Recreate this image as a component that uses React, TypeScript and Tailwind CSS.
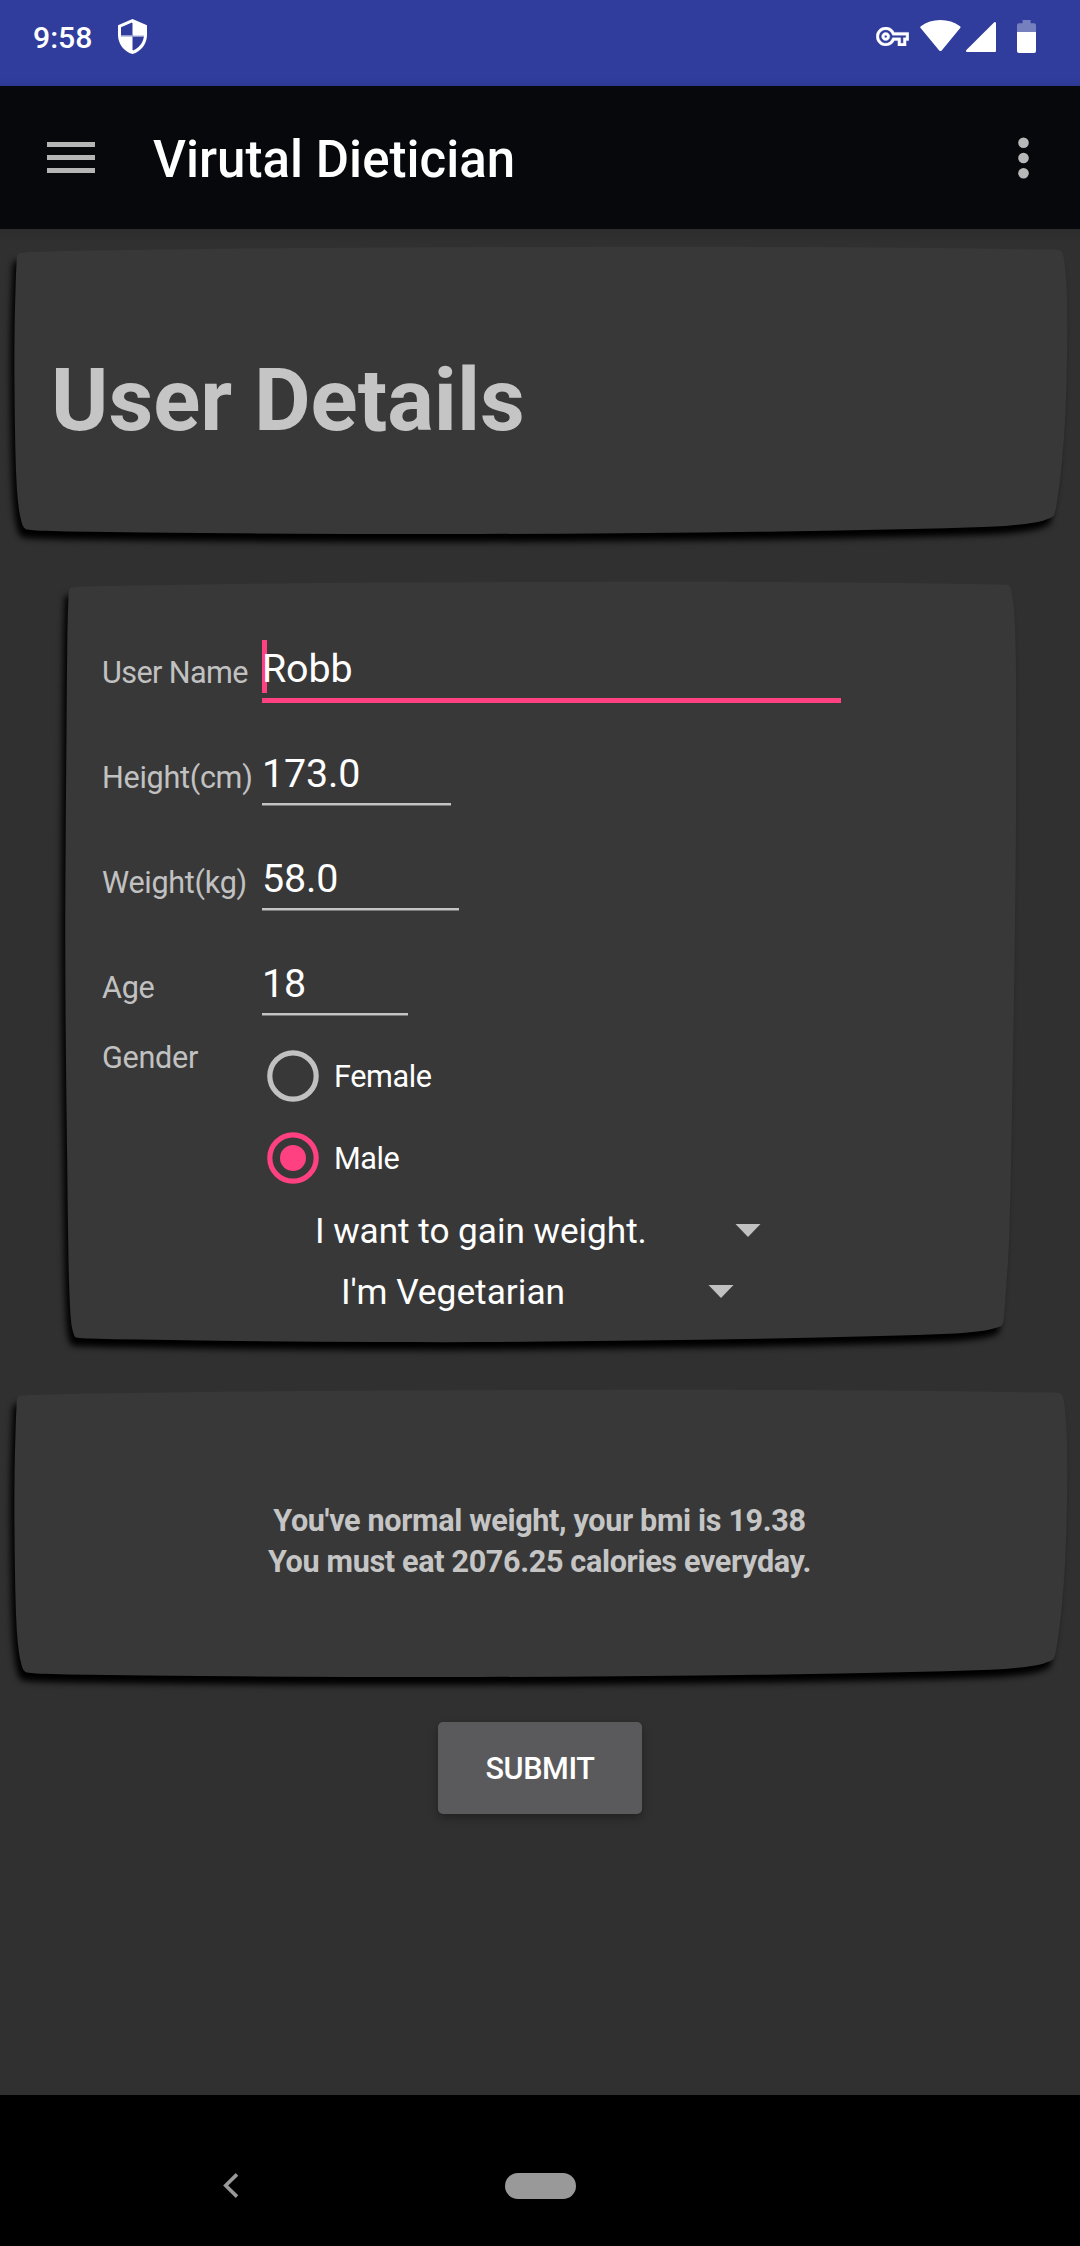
import React from "react";

type Point = [number, number];

// Closed Catmull-Rom spline through the given points.
function smoothPath(points: Point[]): string {
  const n = points.length;
  let d = `M${points[0][0]} ${points[0][1]}`;
  for (let i = 0; i < n; i++) {
    const p0 = points[(i - 1 + n) % n];
    const p1 = points[i];
    const p2 = points[(i + 1) % n];
    const p3 = points[(i + 2) % n];
    const len = Math.hypot(p2[0] - p1[0], p2[1] - p1[1]);
    const tangent = (a: Point, b: Point): Point => {
      const l = Math.hypot(b[0] - a[0], b[1] - a[1]) || 1;
      return [((b[0] - a[0]) / l) * (len / 3), ((b[1] - a[1]) / l) * (len / 3)];
    };
    const t1 = tangent(p0, p2);
    const t2 = tangent(p1, p3);
    d += `C${p1[0] + t1[0]} ${p1[1] + t1[1]} ${p2[0] - t2[0]} ${p2[1] - t2[1]} ${p2[0]} ${p2[1]}`;
  }
  return d + "Z";
}

const WIDE_CARD: Point[] = [
  [20, 6], [40, 4.8], [90, 3.6], [200, 2], [350, 0.8], [540, 0], [800, 0], [960, 1.2], [1040, 2.6], [1059, 3.2],
  [1062.5, 6], [1065, 20], [1067, 50], [1067, 110], [1065, 175], [1061, 225], [1057, 255], [1054.5, 267], [1052, 270],
  [1040, 274.5], [1020, 277.5], [990, 279.8], [900, 282.2], [780, 284.4], [620, 286.2], [480, 287], [350, 287],
  [200, 286], [90, 284.8], [45, 283.8], [27, 282.5], [23.5, 280], [21.3, 274], [19, 263], [16.8, 241], [15.3, 200],
  [14.4, 130], [14.6, 80], [15.6, 40], [16.6, 15], [17.6, 8],
];

const FORM_CARD: Point[] = [
  [71.5, 5.4], [90, 4.2], [150, 3.2], [250, 1.8], [380, 0.6], [540, 0], [780, 0], [900, 1], [970, 2], [1005, 2.8],
  [1009.5, 4], [1012, 12], [1014.6, 35], [1016, 90], [1016, 240], [1014.8, 360], [1012, 530], [1009, 660],
  [1005.5, 715], [1004, 735], [1002.6, 742], [1000, 744.6], [985, 748.5], [955, 751.5], [880, 754], [760, 756.8],
  [640, 758.6], [500, 760], [380, 760], [260, 759.2], [140, 757.6], [90, 756.4], [76, 755.4], [74, 753], [71.5, 743],
  [70, 725], [68.5, 680], [67.2, 580], [65.6, 440], [65.3, 320], [66.5, 150], [67.4, 50], [68.6, 12], [69.4, 7],
];

function CardShape({ points, height }: { points: Point[]; height: number }) {
  return (
    <svg
      className="absolute inset-0 overflow-visible drop-shadow-[-4px_8px_3px_#000000]"
      width="1080"
      height={height}
      viewBox={`0 0 1080 ${height}`}
    >
      <path d={smoothPath(points)} fill="#383838" />
    </svg>
  );
}

function StatusBar() {
  return (
    <header className="flex h-[86px] items-start bg-linear-to-b from-[#303d9d] from-90% to-[#2d3a93] text-white">
      <span className="ml-[33px] mt-[18px] text-[30.2px] font-medium leading-[40px]">9:58</span>
      <svg className="ml-[26px] mt-[19px]" width="29" height="35" viewBox="0 0 29 35">
        <path
          fill="#fff"
          fillRule="evenodd"
          d="M14.5 0L29 6.3V16C29 24.8 23 32.7 14.5 35C6 32.7 0 24.8 0 16V6.3ZM14 3.6L3 8.3V16.6H14ZM15 17.6V31.4C20.6 29.4 25.2 24 25.9 17.6Z"
        />
        <path d="M14.5 4V31M3 17.1H26" stroke="#8c94cb" strokeWidth="0.9" />
      </svg>
      <div className="ml-auto flex items-start">
        <svg className="mt-[27px]" width="33" height="19" viewBox="0 5 24 14" fill="#fff" stroke="#fff" strokeWidth="0.3">
          <path d="M22 19h-6v-4h-2.68c-1.14 2.42-3.6 4-6.32 4-3.86 0-7-3.14-7-7s3.14-7 7-7c2.72 0 5.17 1.58 6.32 4H24v6h-2v4zm-4-2h2v-4h2v-2H11.94l-.23-.67C11.01 8.34 9.11 7 7 7c-2.76 0-5 2.24-5 5s2.24 5 5 5c2.11 0 4.01-1.34 4.71-3.33l.23-.67H18v4zM7 15c-1.65 0-3-1.35-3-3s1.35-3 3-3 3 1.35 3 3-1.35 3-3 3zm0-4c-.55 0-1 .45-1 1s.45 1 1 1 1-.45 1-1-.45-1-1-1z" />
        </svg>
        <svg className="ml-[11px] mt-5" width="41" height="31" viewBox="0 0 41 31" fill="#fff">
          <path d="M0.8 6.2C6.4 2.2 13 0 20.4 0S34.5 2.2 40 6.2C40.7 6.7 40.7 7.5 40.2 8.1L21.7 30.4C21 31.2 19.9 31.2 19.2 30.4L0.6 8.1C0.1 7.5 0.1 6.7 0.8 6.2Z" />
        </svg>
        <svg className="ml-[5px] mt-[22px]" width="30" height="30" viewBox="0 0 30 30" fill="#fff">
          <path d="M28 0.4C28.9-.4 30 0 30 1.3V29Q30 30 29 30H1.4C0 30-.4 28.8.4 27.9Z" />
        </svg>
        <svg className="ml-[21px] mr-11 mt-5" width="19" height="33" viewBox="0 0 19 33">
          <path d="M5.6 0H13.6V3.2H17Q19 3.2 19 5.2V12H0V5.2Q0 3.2 2 3.2H5.6Z" fill="#7780bf" />
          <path d="M0 12H19V31Q19 33 17 33H2Q0 33 0 31Z" fill="#fff" />
        </svg>
      </div>
    </header>
  );
}

function AppBar() {
  return (
    <div className="flex h-[143px] items-center bg-[#07080c]">
      <div className="ml-[47px] flex flex-col gap-2">
        <i className="h-[5px] w-12 bg-[#b5b5b5]" />
        <i className="h-[5px] w-12 bg-[#b5b5b5]" />
        <i className="h-[5px] w-12 bg-[#b5b5b5]" />
      </div>
      <h1 className="ml-[58px] pt-[5px] text-[51px] font-medium leading-[60px] tracking-[0.04px] text-white">
        Virutal Dietician
      </h1>
      <svg className="ml-auto mr-[51px]" width="11" height="42" viewBox="0 0 11 42" fill="#b8b8b8">
        <circle cx="5.5" cy="5.8" r="5.3" />
        <circle cx="5.5" cy="21" r="5.3" />
        <circle cx="5.5" cy="36.2" r="5.3" />
      </svg>
    </div>
  );
}

function Label({ children }: { children: React.ReactNode }) {
  return (
    <span className="w-40 shrink-0 whitespace-nowrap text-[30.6px] leading-[65px] tracking-[-0.3px] text-[#c1c1c1]">
      {children}
    </span>
  );
}

function Field({ label, value, lineClass }: { label: string; value: string; lineClass: string }) {
  return (
    <div className="flex h-[105px]">
      <Label>{label}</Label>
      <div className="text-[39.4px] leading-[57px] tracking-[-0.15px] text-white">
        <div className="h-[58px]">{value}</div>
        <div className={lineClass} />
      </div>
    </div>
  );
}

function Radio({ label, checked }: { label: string; checked?: boolean }) {
  const color = checked ? "#ff4081" : "#c1c1c1";
  return (
    <div className="flex h-[82px] items-center gap-[15px] pl-[5px]">
      <svg width="52" height="52" viewBox="0 0 52 52">
        <circle cx="26" cy="26" r="23.2" fill="none" stroke={color} strokeWidth="5.2" />
        {checked && <circle cx="26" cy="26" r="13" fill={color} />}
      </svg>
      <span className="pt-[2px] text-[30.6px] leading-[40px] tracking-[-0.4px] text-white">{label}</span>
    </div>
  );
}

function Caret() {
  return (
    <svg width="26" height="13" viewBox="0 0 26 13">
      <path d="M0.5 0H25.5L13 13Z" fill="#c1c1c1" />
    </svg>
  );
}

export default function App() {
  return (
    <div className="flex h-[2246px] w-[1080px] flex-col overflow-hidden bg-[#303030] font-[Roboto,sans-serif]">
      <StatusBar />
      <AppBar />
      <main className="flex flex-1 flex-col bg-linear-to-b from-[#2c2c2c] to-[#303030] to-[14px]">
        <section className="relative mt-[18px] h-[287px]">
          <CardShape points={WIDE_CARD} height={287} />
          <h2 className="relative pl-[51px] pt-[103px] text-[87.2px] font-bold leading-[100px] text-[#c5c5c5]">
            User Details
          </h2>
        </section>

        <section className="relative mt-12 h-[760px]">
          <CardShape points={FORM_CARD} height={760} />
          <div className="relative pl-[102px] pt-[58px]">
            <div className="flex h-[105px]">
              <Label>
                <span className="tracking-[-0.6px]">User Name</span>
              </Label>
              <div className="text-[39.4px] leading-[57px] tracking-[-0.15px] text-white">
                <div className="relative h-[58px]">
                  <i className="absolute left-0 top-0 h-[53px] w-[5px] bg-[#ff4081]" />
                  <span className="relative">Robb</span>
                </div>
                <div className="h-[5px] w-[579px] bg-[#ff4081]" />
              </div>
            </div>
            <Field label="Height(cm)" value="173.0" lineClass="h-[3px] w-[189px] border-b border-[#7a7a7a] bg-[#c4c4c4]" />
            <Field label="Weight(kg)" value="58.0" lineClass="h-[3px] w-[197px] border-b border-[#7a7a7a] bg-[#c4c4c4]" />
            <div className="h-20">
              <Field label="Age" value="18" lineClass="h-[3px] w-[146px] border-b border-[#7a7a7a] bg-[#c4c4c4]" />
            </div>
            <div className="flex h-[165px]">
              <span className="w-40 text-[30.6px] leading-[45px] tracking-[-0.3px] text-[#c1c1c1]">Gender</span>
              <div>
                <Radio label="Female" />
                <Radio label="Male" checked />
              </div>
            </div>
            <div className="ml-[213px] flex h-[61px] w-[446px] items-center justify-between text-[35.2px] leading-[44px] text-white">
              <span className="tracking-[-0.04px]">I want to gain weight.</span>
              <Caret />
            </div>
            <div className="ml-[239px] flex h-[61px] w-[393px] items-center justify-between text-[35.3px] leading-[44px] text-white">
              <span>I'm Vegetarian</span>
              <Caret />
            </div>
          </div>
        </section>

        <section className="relative mt-12 h-[287px]">
          <CardShape points={WIDE_CARD} height={287} />
          <div className="relative pr-px pt-[110px] text-center text-[30.6px] font-bold leading-[41px] tracking-[-0.36px] text-[#c5c5c5]">
            <p>You've normal weight, your bmi is 19.38</p>
            <p>You must eat 2076.25 calories everyday.</p>
          </div>
        </section>

        <button className="mt-[45px] h-[92px] w-[204px] self-center rounded-[5px] bg-[#5a5a5c] pt-[2px] text-[30.6px] font-medium leading-[40px] tracking-[-0.4px] text-white shadow-[0_4px_8px_rgba(0,0,0,0.3)]">
          SUBMIT
        </button>
      </main>

      <nav className="flex h-[151px] items-start bg-black pt-[78px]">
        <svg className="ml-[223px]" width="16" height="25" viewBox="0 0 16 25">
          <path d="M14 1.4L2.7 12.5L14 23.6" fill="none" stroke="#999" strokeWidth="3.6" />
        </svg>
        <div className="ml-[266px] h-[26px] w-[71px] rounded-full bg-[#999999]" />
      </nav>
    </div>
  );
}
